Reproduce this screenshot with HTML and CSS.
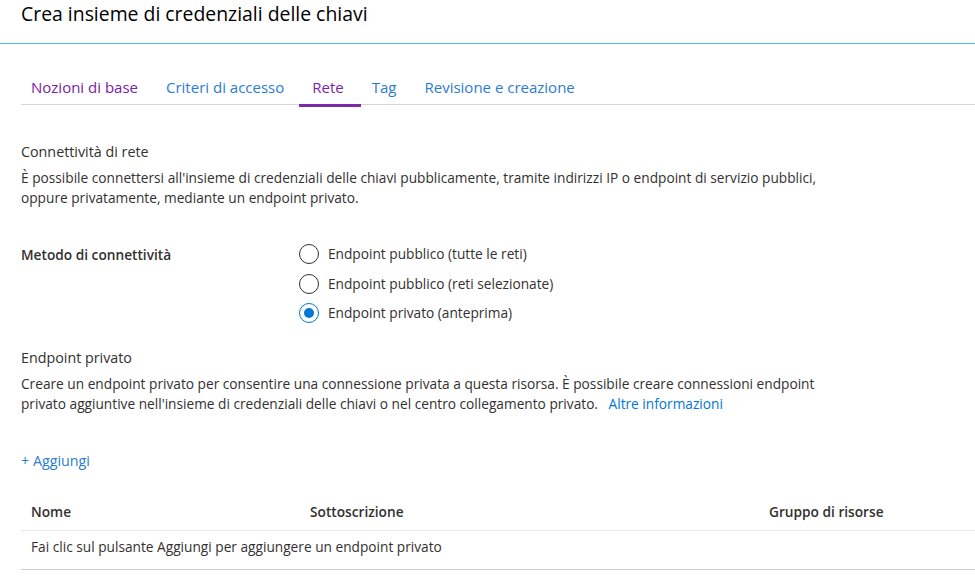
FILE: index.html
```html
<!DOCTYPE html>
<html lang="it">
<head>
<meta charset="utf-8">
<link rel="stylesheet" href="styles.css">
</head>
<body>
<div class="page">
  <h1 class="title">Crea insieme di credenziali delle chiavi</h1>
  <div class="dotted"></div>
  <nav class="tabs">
    <span class="tab visited">Nozioni di base</span>
    <span class="tab">Criteri di accesso</span>
    <span class="tab active">Rete</span>
    <span class="tab">Tag</span>
    <span class="tab">Revisione e creazione</span>
  </nav>
  <section class="content">
    <h2 class="section-title">Connettività di rete</h2>
    <p class="desc">È possibile connettersi all'insieme di credenziali delle chiavi pubblicamente, tramite indirizzi IP o endpoint di servizio pubblici,<br>oppure privatamente, mediante un endpoint privato.</p>
    <div class="field">
      <div class="label">Metodo di connettività</div>
      <div class="radios">
        <div class="radio"><span class="circle"></span>Endpoint pubblico (tutte le reti)</div>
        <div class="radio"><span class="circle"></span>Endpoint pubblico (reti selezionate)</div>
        <div class="radio"><span class="circle checked"></span>Endpoint privato (anteprima)</div>
      </div>
    </div>
    <h2 class="section-title pe">Endpoint privato</h2>
    <p class="desc">Creare un endpoint privato per consentire una connessione privata a questa risorsa. È possibile creare connessioni endpoint<br>privato aggiuntive nell'insieme di credenziali delle chiavi o nel centro collegamento privato. <a class="link">Altre informazioni</a></p>
    <div class="add">+ Aggiungi</div>
    <div class="table">
      <div class="row head">
        <div class="c1">Nome</div>
        <div class="c2">Sottoscrizione</div>
        <div class="c3">Gruppo di risorse</div>
      </div>
      <div class="row body">
        <div class="empty">Fai clic sul pulsante Aggiungi per aggiungere un endpoint privato</div>
      </div>
    </div>
  </section>
</div>
</body>
</html>
```

FILE: styles.css
```css
* { box-sizing: border-box; }
html, body { margin: 0; padding: 0; background: #fff; }
body { font-family: "Open Sans", "Noto Sans", sans-serif; color: #323130; font-size: 13.7px; overflow: hidden; }
.page { width: 975px; height: 587px; }
.title { margin: 0; height: 27px; padding: 1px 0 0 21px; font-size: 19.4px; font-weight: 400; line-height: 26px; color: #000; }
.dotted { margin-top: 16px; height: 1px; background: #55b9e6; }
.tabs { display: flex; margin: 30px 0 0 21px; border-bottom: 1px solid #d6d6d6; height: 31px; padding-left: 10px; }
.tab { font-size: 15px; color: #2b7cd3; line-height: 27px; margin-right: 28px; position: relative; }
.tab.visited { color: #7b22a6; }
.tab.active { color: #7b22a6; }
.tab.active::after { content: ""; position: absolute; left: -13px; right: -17px; bottom: -3px; height: 3px; background: #7b2aa8; }
.content { padding-left: 21px; }
.section-title { margin: 37px 0 0; font-size: 14.3px; font-weight: 400; line-height: 20px; color: #323130; }
.desc { margin: 6px 0 0; line-height: 20px; }
.field { display: flex; margin-top: 36px; }
.label { width: 278px; font-weight: 600; line-height: 20px; padding-top: 1px; }
.radios { display: flex; flex-direction: column; gap: 9.5px; }
.radio { display: flex; align-items: center; line-height: 20px; }
.circle { width: 20px; height: 20px; border: 1px solid #323130; border-radius: 50%; margin-right: 9px; position: relative; }
.circle.checked { border-color: #0078d4; }
.circle.checked::after { content: ""; position: absolute; left: 4px; top: 4px; width: 10px; height: 10px; border-radius: 50%; background: #0078d4; }
.section-title.pe { margin-top: 25px; }
.link { color: #0078d4; margin-left: 7px; }
.add { margin-top: 37px; color: #2b7cd3; font-size: 14.3px; line-height: 20px; }
.table { margin-top: 21px; }
.row { display: flex; border-bottom: 1px solid #e8e8e8; padding-left: 10px; }
.row.head { height: 39px; align-items: center; font-weight: 600; }
.row.body { height: 39px; padding-top: 6px; line-height: 20px; border-bottom-color: #d0d0d0; }
.c1 { width: 279px; }
.c2 { width: 459px; }
.c3 { flex: 1; }
```
